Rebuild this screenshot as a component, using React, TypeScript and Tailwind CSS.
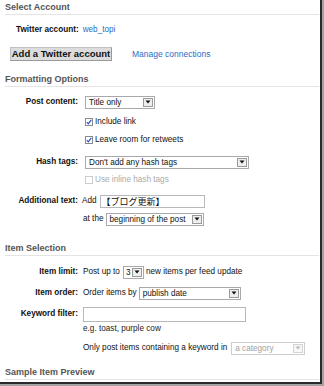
import React from "react";

function Arrow({ disabled }: { disabled?: boolean }) {
  return (
    <span
      className={`mr-[1px] flex h-[9px] w-[10px] shrink-0 items-center justify-center border ${
        disabled ? "border-[#d4d4d4] bg-[#f7f7f7]" : "border-[#9a9a9a] bg-[#eeeeee]"
      }`}
    >
      <svg width="6" height="4" viewBox="0 0 6 4">
        <path d="M0.5 0.5 L5.5 0.5 L3 3.5 Z" fill={disabled ? "#bbbbbb" : "#111111"} />
      </svg>
    </span>
  );
}

function Sel({
  w,
  text,
  disabled,
  pad = "pl-[3px]",
}: {
  w: string;
  text: string;
  disabled?: boolean;
  pad?: string;
}) {
  return (
    <div
      className={`flex h-[13px] shrink-0 items-center border bg-white ${w} ${
        disabled ? "border-[#cfcfcf] text-[#a0a0a0]" : "border-[#a9a9a9] text-[#111]"
      }`}
    >
      <span className={`flex-1 whitespace-nowrap leading-[11px] ${pad}`}>{text}</span>
      <Arrow disabled={disabled} />
    </div>
  );
}

function Check({ checked, disabled }: { checked?: boolean; disabled?: boolean }) {
  return (
    <span
      className={`flex h-[8px] w-[8px] shrink-0 items-center justify-center border bg-white ${
        disabled ? "border-[#cccccc]" : "border-[#8a8a8a]"
      }`}
    >
      {checked && (
        <svg width="6" height="6" viewBox="0 0 6 6">
          <path d="M0.8 3.2 L2.3 4.8 L5.3 0.8" fill="none" stroke="#2a4fc0" strokeWidth="1.2" />
        </svg>
      )}
    </span>
  );
}

function Heading({ children, mt }: { children: React.ReactNode; mt: string }) {
  return (
    <div
      className={`${mt} ml-[5px] mr-[1px] h-[15px] border-b border-[#e4e4e4] text-[9px] font-bold leading-[14px] text-[#555]`}
    >
      {children}
    </div>
  );
}

function Row({ label, mt, children }: { label?: string; mt: string; children: React.ReactNode }) {
  return (
    <div className={`${mt} flex h-[14px] items-center`}>
      <div className="w-[78px] shrink-0 text-right font-bold text-[#111]">{label ?? ""}</div>
      <div className="ml-[5px] flex items-center whitespace-nowrap">{children}</div>
    </div>
  );
}

export default function App() {
  return (
    <div className="h-[386px] w-[324px] border-b-2 border-r-2 border-[#a2a2a2] bg-white font-['Liberation_Sans',Arial,sans-serif]">
      <div className="flex h-full w-full flex-col overflow-hidden border-b-2 border-r-2 border-[#2a2a2a] text-[8.2px] leading-[14px] text-[#111]">
        <Heading mt="mt-0">Select Account</Heading>

        <div className="mt-[8px] flex h-[14px] items-center pl-[16px]">
          <span className="font-bold">Twitter account:</span>
          <span className="ml-[4px] text-[#2b6dc6]">web_topi</span>
        </div>

        <div className="mt-[10px] flex h-[14px] items-center">
          <div className="ml-[10px] flex h-[14px] w-[102px] items-center justify-center border border-[#c2c2c2] border-b-[#9a9a9a] border-r-[#9a9a9a] bg-[#dcdcdc] text-[9.5px] font-bold leading-[12px] text-[#111]">
            Add a Twitter account
          </div>
          <span className="ml-[20px] text-[8.5px] text-[#2b6dc6]">Manage connections</span>
        </div>

        <Heading mt="mt-[11px]">Formatting Options</Heading>

        <Row label="Post content:" mt="mt-[8px]">
          <div className="ml-[2px]">
            <Sel w="w-[70px]" text="Title only" />
          </div>
        </Row>
        <Row mt="mt-[6px]">
          <div className="ml-[2px] flex items-center gap-[2px]">
            <Check checked />
            <span>Include link</span>
          </div>
        </Row>
        <Row mt="mt-[4px]">
          <div className="ml-[2px] flex items-center gap-[2px]">
            <Check checked />
            <span>Leave room for retweets</span>
          </div>
        </Row>
        <Row label="Hash tags:" mt="mt-[8px]">
          <div className="ml-[2px]">
            <Sel w="w-[164px]" text="Don't add any hash tags" />
          </div>
        </Row>
        <Row mt="mt-[4px]">
          <div className="ml-[2px] flex items-center gap-[2px] text-[#aaaaaa]">
            <Check disabled />
            <span>Use inline hash tags</span>
          </div>
        </Row>
        <Row label="Additional text:" mt="mt-[7px]">
          <span className="-ml-[1px]">Add</span>
          <div className="ml-[3px] flex h-[13px] w-[105px] items-center border border-[#b9b9b9] bg-white pl-[1px] font-['Noto_Sans_CJK_JP',sans-serif] text-[9px] leading-[11px] text-[#111]">
            【ブログ更新】
          </div>
        </Row>
        <Row mt="mt-[4px]">
          <span>at the</span>
          <div className="ml-[2px]">
            <Sel w="w-[98px]" text="beginning of the post" />
          </div>
        </Row>

        <Heading mt="mt-[15px]">Item Selection</Heading>

        <Row label="Item limit:" mt="mt-[9px]">
          <span>Post up to</span>
          <div className="ml-[3px]">
            <Sel w="w-[21px]" text="3" pad="pl-[2px]" />
          </div>
          <span className="ml-[2px]">new items per feed update</span>
        </Row>
        <Row label="Item order:" mt="mt-[7px]">
          <span>Order items by</span>
          <div className="ml-[2px]">
            <Sel w="w-[102px]" text="publish date" />
          </div>
        </Row>
        <Row label="Keyword filter:" mt="mt-[7px]">
          <div className="h-[15px] w-[163px] border border-[#b9b9b9] bg-white" />
        </Row>
        <Row mt="mt-[1px]">
          <span className="text-[#222]">e.g. toast, purple cow</span>
        </Row>
        <Row mt="mt-[5px]">
          <span>Only post items containing a keyword in</span>
          <div className="ml-[4px]">
            <Sel w="w-[74px]" text="a category" disabled />
          </div>
        </Row>

        <Heading mt="mt-[10px]">Sample Item Preview</Heading>
      </div>
    </div>
  );
}
